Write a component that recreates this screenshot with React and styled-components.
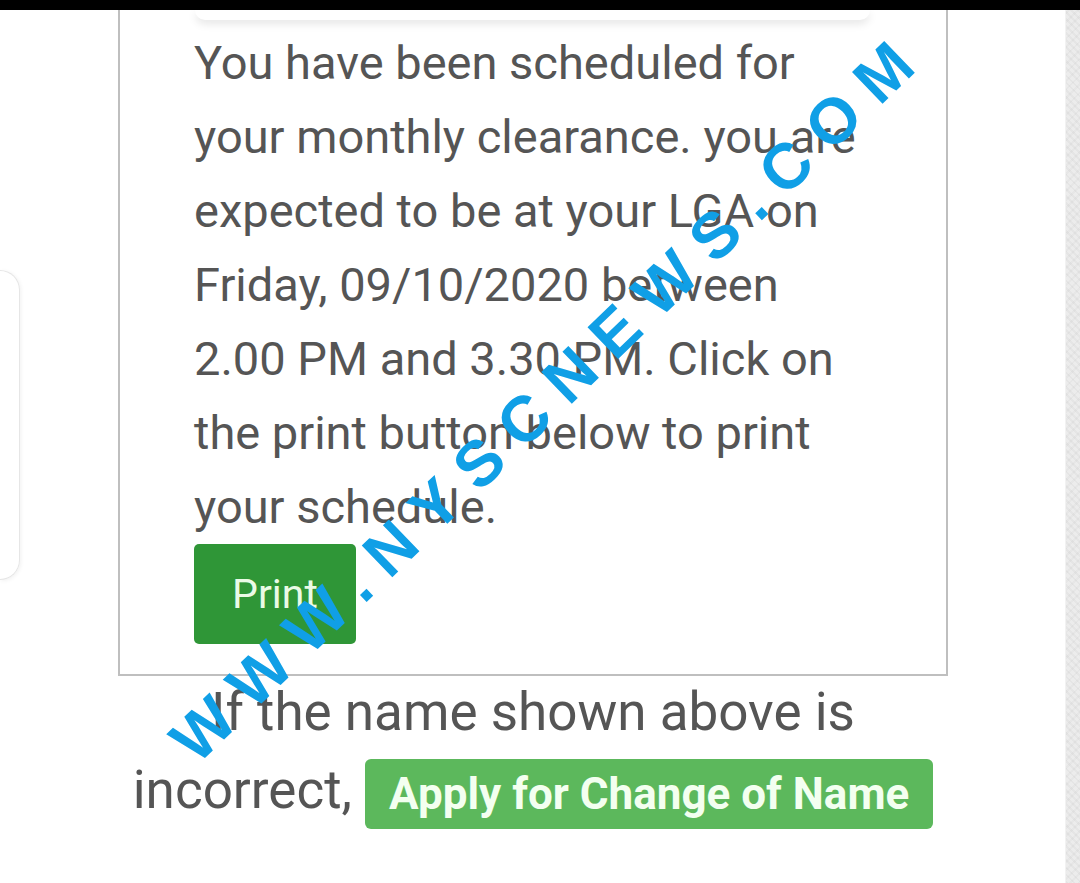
import React from "react";
import styled, { createGlobalStyle } from "styled-components";

const Global = createGlobalStyle`
  html, body { margin: 0; padding: 0; background: #ffffff; }
  body { width: 1080px; height: 883px; overflow: hidden; font-family: Roboto, "Liberation Sans", sans-serif; }
  * { box-sizing: border-box; }
`;

const Frame = styled.div`
  width: 1080px;
  height: 883px;
  display: flex;
  flex-direction: column;
  background: #fff;
`;

const TopBar = styled.div`
  height: 10px;
  background: #000;
  flex: none;
`;

const Stage = styled.div`
  position: relative;
  flex: 1;
  display: flex;
  align-items: flex-start;
`;

const SideCard = styled.div`
  width: 20px;
  height: 310px;
  margin-top: 260px;
  flex: none;
  border: 1px solid #e6e6e6;
  border-left: none;
  border-radius: 0 22px 22px 0;
  box-shadow: 1px 1px 4px rgba(0, 0, 0, 0.06);
`;

const Main = styled.div`
  width: 830px;
  margin-left: 98px;
  flex: none;
`;

const Card = styled.div`
  border: 2px solid #bfbfbf;
  border-top: none;
  padding-bottom: 30px;
`;

const Panel = styled.div`
  height: 10px;
  margin: 0 76px 0 75px;
  border-radius: 0 0 14px 14px;
  background: #fff;
  box-shadow: 0 4px 8px rgba(0, 0, 0, 0.1);
`;

const Message = styled.p`
  margin: 6px 0 0 0;
  padding-left: 74px;
  font-size: 47px;
  line-height: 74px;
  color: #555;
  white-space: nowrap;
`;

const GreenButton = styled.button`
  display: ${(p) => (p.$inline ? "inline-flex" : "flex")};
  align-items: center;
  justify-content: center;
  border: none;
  font-family: Roboto, "Liberation Sans", sans-serif;
  cursor: pointer;
  background: ${(p) => p.$bg};
  color: ${(p) => p.$fg};
  font-size: ${(p) => p.$size}px;
  font-weight: ${(p) => p.$weight};
  height: ${(p) => p.$h}px;
  width: ${(p) => (p.$w ? `${p.$w}px` : "auto")};
  padding: 0 ${(p) => p.$px}px;
  border-radius: ${(p) => p.$r}px;
  margin-left: ${(p) => p.$ml}px;
  vertical-align: middle;
`;

const Notice = styled.div`
  margin-top: -3px;
  text-align: center;
  font-size: 53px;
  line-height: 78px;
  color: #555;
  white-space: nowrap;
`;

const RightStrip = styled.div`
  margin-left: auto;
  width: 15px;
  align-self: stretch;
  flex: none;
  background:
    repeating-linear-gradient(45deg, rgba(0,0,0,0.03) 0 2px, transparent 2px 5px),
    repeating-linear-gradient(-45deg, rgba(0,0,0,0.025) 0 2px, transparent 2px 6px),
    #ececec;
  border-left: 1px solid #f2f2f2;
`;

const Watermark = styled.div`
  position: absolute;
  left: 542px;
  top: 392px;
  transform: translate(-50%, -50%) rotate(-44deg);
  padding-left: 18px;
  pointer-events: none;
  white-space: nowrap;
  font-family: "Liberation Sans", Arial, sans-serif;
  font-weight: 700;
  font-size: 64px;
  letter-spacing: 18px;
  line-height: 1;
  color: #109fe6;
`;

const lines = [
  "You have been scheduled for",
  "your monthly clearance. you are",
  "expected to be at your LGA on",
  "Friday, 09/10/2020 between",
  "2.00 PM and 3.30 PM. Click on",
  "the print button below to print",
  "your schedule.",
];

export default function App() {
  return (
    <>
      <Global />
      <Frame>
        <TopBar />
        <Stage>
          <SideCard />
          <Main>
            <Card>
              <Panel />
              <Message>
                {lines.map((l, i) => (
                  <React.Fragment key={i}>
                    {l}
                    {i < lines.length - 1 && <br />}
                  </React.Fragment>
                ))}
              </Message>
              <GreenButton $bg="#2f9637" $fg="#eafbe6" $size={41} $weight={400} $h={100} $w={162} $px={0} $r={5} $ml={74}>
                Print
              </GreenButton>
            </Card>
            <Notice>
              If the name shown above is
              <br />
              incorrect,{" "}
              <GreenButton $inline $bg="#5cb85c" $fg="#f3fff0" $size={44} $weight={700} $h={70} $px={24} $r={6} $ml={0}>
                Apply for Change of Name
              </GreenButton>
            </Notice>
          </Main>
          <RightStrip />
          <Watermark>WWW.NYSCNEWS.COM</Watermark>
        </Stage>
      </Frame>
    </>
  );
}
